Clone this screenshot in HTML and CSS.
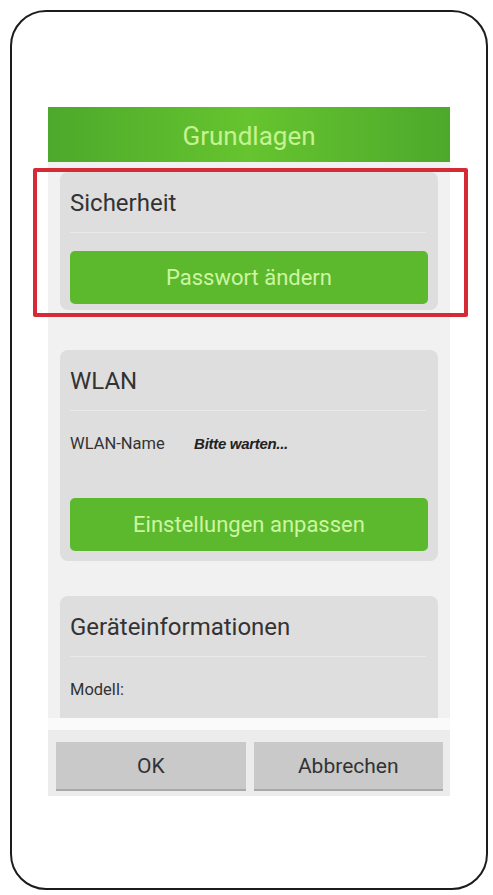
FILE: index.html
```html
<!DOCTYPE html>
<html lang="de">
<head>
  <meta charset="UTF-8">
  <meta name="viewport" content="width=device-width, initial-scale=1.0">
  <title>Grundlagen</title>
  <link rel="stylesheet" href="styles.css">
</head>
<body>

<div class="phone">
  <div class="dialog">
    <div class="dialog-title">Grundlagen</div>

    <div class="dialog-body">
      <div class="card-wrap">
        <div class="card card-security">
          <div class="card-title">Sicherheit</div>
          <button class="green-btn">Passwort ändern</button>
        </div>
        <div class="highlight"></div>
      </div>

      <div class="card card-wlan">
        <div class="card-title">WLAN</div>
        <div class="card-row">
          <span class="row-label">WLAN-Name</span>
          <span class="row-value">Bitte warten...</span>
        </div>
        <button class="green-btn">Einstellungen anpassen</button>
      </div>

      <div class="card card-device">
        <div class="card-title">Geräteinformationen</div>
        <div class="card-row">
          <span class="row-label">Modell:</span>
        </div>
      </div>
    </div>

    <div class="dialog-gap"></div>

    <div class="dialog-footer">
      <button class="gray-btn">OK</button>
      <button class="gray-btn">Abbrechen</button>
    </div>
  </div>
</div>

</body>
</html>
```

FILE: styles.css
```css
body {
  font-family: Roboto, "Noto Sans", sans-serif;
  background-color: #fff;
  color: #333;
  margin: 0;
}
.phone {
  box-sizing: border-box;
  width: 478px;
  height: 880px;
  margin: 10px;
  border: 2px solid #1c1c1c;
  border-radius: 36px;
  overflow: hidden;
}
.dialog {
  width: 402px;
  margin: 95px 0 0 36px;
  background-color: #f1f1f1;
}
.dialog-title {
  height: 55px;
  line-height: 58px;
  text-align: center;
  font-size: 26px;
  color: #c6f392;
  background: linear-gradient(to right, #4ca92b, #66c42f 50%, #4ca92b);
}
/* scroll area: clipped at the bottom only, so the highlight frame can stick out sideways */
.dialog-body {
  height: 546px;
  padding: 10px 12px 0;
  clip-path: inset(-10px -40px 0 -40px);
}
.card-wrap {
  position: relative;
  margin-bottom: 40px;
}
.card {
  background-color: #dedede;
  border-radius: 8px;
  padding: 0 10px;
}
.card-security {
  padding-bottom: 6px;
}
.card-wlan {
  padding-bottom: 10px;
  margin-bottom: 35px;
}
.card-device {
  padding-bottom: 40px;
}
.card-title {
  height: 60px;
  line-height: 62px;
  font-size: 24px;
  color: #333;
  border-bottom: 1px solid #e9e9e9;
  margin-right: 2px;
}
.card-row {
  padding: 25px 0 28px;
  line-height: 16px;
  font-size: 16.5px;
  color: #333;
}
.row-label {
  display: inline-block;
  width: 120px;
}
.row-value {
  font-family: "Liberation Sans", Arial, sans-serif;
  font-weight: bold;
  font-style: italic;
  font-size: 15px;
  letter-spacing: -0.3px;
  color: #222;
}
.green-btn {
  display: block;
  width: 100%;
  height: 53px;
  margin-top: 18px;
  border: none;
  border-radius: 5px;
  background-color: #5cb92e;
  color: #cdf5a2;
  font-family: inherit;
  font-size: 22px;
}
.highlight {
  position: absolute;
  top: -4px;
  left: -27px;
  right: -30px;
  bottom: -7px;
  border: 4px solid #d52b36;
  border-radius: 2px;
}
.dialog-gap {
  height: 12px;
  background-color: #fafafa;
}
.dialog-footer {
  display: flex;
  gap: 8px;
  padding: 12px 7px 5px 8px;
  background-color: #ececec;
}
.gray-btn {
  flex: 1;
  height: 49px;
  border: none;
  border-bottom: 2px solid #a9a9a9;
  background-color: #c9c9c9;
  color: #333;
  font-family: inherit;
  font-size: 21px;
}
```
